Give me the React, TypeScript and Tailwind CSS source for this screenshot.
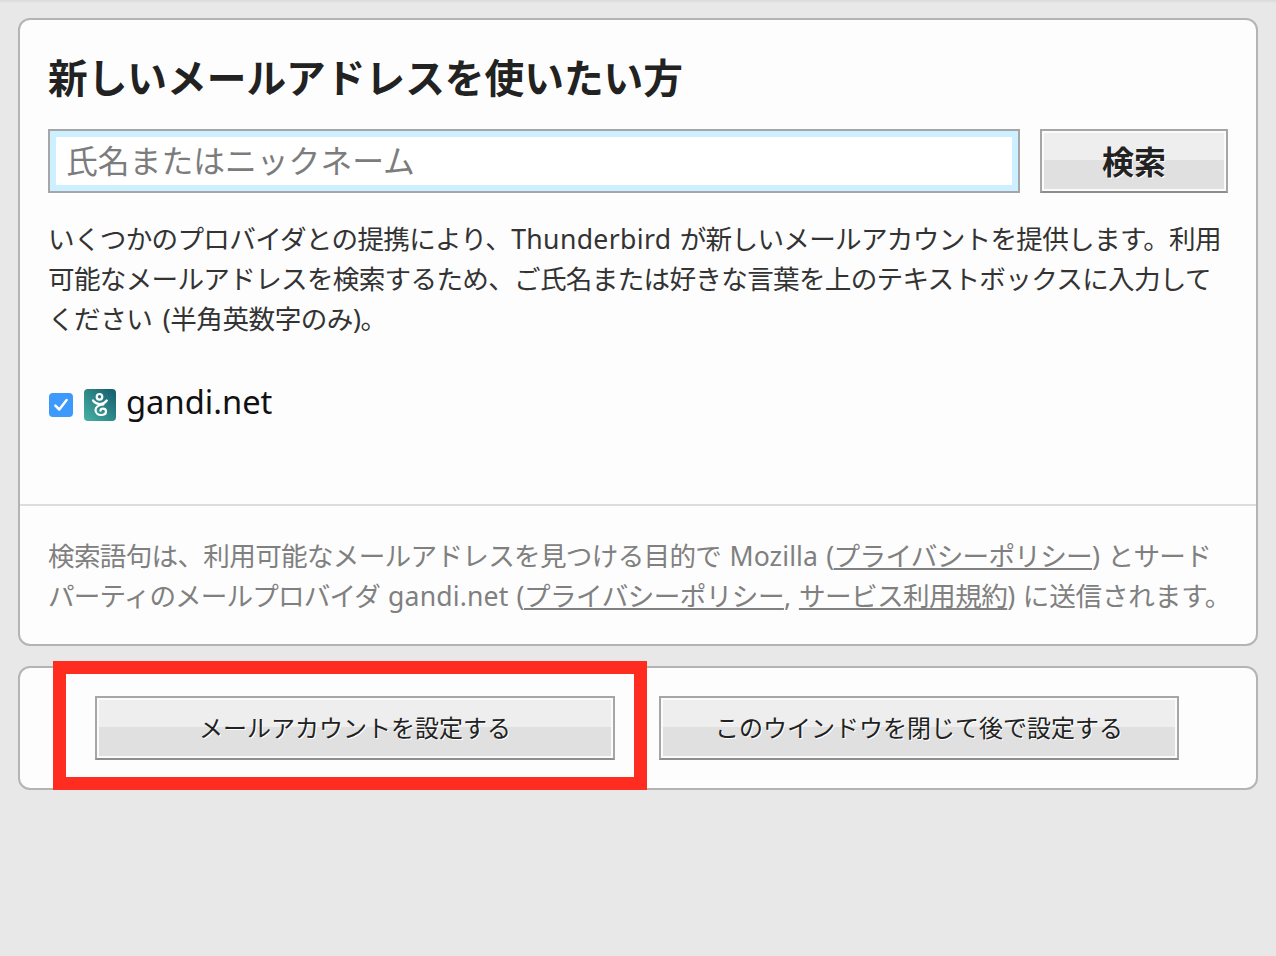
const font = "font-['Noto_Sans','Noto_Sans_CJK_JP',sans-serif]";

const GrayButton = ({ label, className }: { label: string; className: string }) => (
  <button
    type="button"
    className={`border-2 border-[#a6a6a6] border-b-[#8e8e8e] shadow-[inset_0_0_0_2px_#fbfbfb] bg-[linear-gradient(#eeeeee_29px,#e0e0e0_29px)] text-[#222222] [text-shadow:1px_1px_0_#ffffff] font-['Liberation_Sans','Noto_Sans_CJK_JP',sans-serif] ${className}`}
  >
    {label}
  </button>
);

const GandiLogo = () => (
  <svg width="32" height="32" viewBox="0 0 32 32" className="block shrink-0">
    <defs>
      <linearGradient id="gandi" x1="0" y1="1" x2="1" y2="0">
        <stop offset="0" stopColor="#46b3a3" />
        <stop offset="1" stopColor="#155a6c" />
      </linearGradient>
    </defs>
    <rect width="32" height="32" rx="4" fill="url(#gandi)" />
    <circle cx="15.500" cy="7.800" r="2.800" fill="none" stroke="#fff" strokeWidth="2.200" />
    <path
      d="M9 11.500c1.800 2.400 4.500 3.500 7 3.500 2.700 0 5-1.200 6.800-3.500M19.500 15.500c-4 .5-8 2-8 5.500 0 3 2.500 5 5.500 5 3 0 5-1.500 5-3.500 0-1.800-1.500-2.800-3-2.800-1.500 0-2.500.8-2.500 2"
      fill="none"
      stroke="#fff"
      strokeWidth="2.200"
      strokeLinecap="round"
    />
  </svg>
);

export default function App() {
  return (
    <div className={`${font} relative min-h-[956px] bg-[#e8e8e8] px-[18px] pt-[18px] shadow-[inset_0_3px_2px_-1px_#dcdcdc]`}>
      <section className="h-[628px] rounded-[12px] border-2 border-[#b4b4b4] bg-[#fdfdfd] flex flex-col">
        <div className="flex-1 px-[28px]">
          <h1 className="mt-[34px] text-[39.700px] leading-[50px] font-bold text-[#222222] font-['Liberation_Sans','Noto_Sans_CJK_JP',sans-serif]">新しいメールアドレスを使いたい方</h1>
          <div className="mt-[25px] flex gap-[20px]">
            <div className="h-[64px] w-[972px] border-2 border-[#a6a6a6] bg-white shadow-[inset_0_0_0_6px_#ccf0ff] flex items-center pl-[16px] text-[31.800px] text-[#7c7c7c]">
              氏名またはニックネーム
            </div>
            <GrayButton label="検索" className="h-[64px] w-[188px] pt-[3px] text-[32px] font-bold" />
          </div>
          <p className="mt-[26px] whitespace-nowrap text-[26.6px] leading-[40px] tracking-[-0.7px] [word-spacing:2px] text-[#333333]">
            いくつかのプロバイダとの提携により、<span className="tracking-[0.35px]">Thunderbird</span> が新しいメールアカウントを提供します。利用
            <br />
            可能なメールアドレスを検索するため、ご氏名または好きな言葉を上のテキストボックスに入力して
            <br />
            <span className="[word-spacing:4px] tracking-[-0.5px]">ください (半角英数字のみ)。</span>
          </p>
          <div className="mt-[44px] flex items-center h-[40px]">
            <span className="mt-[4px] flex h-[24px] w-[24px] items-center justify-center rounded-[4px] bg-[#3d99fb] ml-[1px]">
              <svg width="18" height="18" viewBox="0 0 16 16" fill="none" stroke="#fff" strokeWidth="2.200" strokeLinecap="round" strokeLinejoin="round">
                <path d="M3 8.500 6.500 12 13 3.500" />
              </svg>
            </span>
            <span className="ml-[11px] mt-[4px]"><GandiLogo /></span>
            <span className="ml-[10px] -mt-[2px] text-[32.700px] text-[#111111]">gandi.net</span>
          </div>
        </div>
        <div className="h-[140px] border-t-2 border-[#dddddd] px-[28px] pt-[30px] whitespace-nowrap text-[26.6px] leading-[40px] tracking-[-0.7px] [word-spacing:2px] text-[#808080]">
          <p>
            検索語句は、利用可能なメールアドレスを見つける目的で <span className="tracking-[0.1px]">Mozilla</span> (<span className="underline">プライバシーポリシー</span>) とサード
          </p>
          <p className="tracking-[-0.85px]">
            パーティのメールプロバイダ <span className="tracking-[0.15px]">gandi.net</span>{' '}
            <span className="tracking-[-0.55px]">(<span className="underline">プライバシーポリシー</span>, <span className="underline">サービス利用規約</span>)</span>{' '}
            <span className="tracking-[-0.2px]">に送信されます。</span>
          </p>
        </div>
      </section>
      <section className="mt-[20px] flex h-[124px] gap-[44px] rounded-[12px] border-2 border-[#b4b4b4] bg-[#fdfdfd] pl-[75px] pt-[28px]">
        <GrayButton label="メールアカウントを設定する" className="h-[64px] w-[520px] pt-[2px] text-[24px]" />
        <GrayButton label="このウインドウを閉じて後で設定する" className="h-[64px] w-[520px] pt-[2px] text-[24px]" />
      </section>
      {/* annotation drawn over the screenshot */}
      <div className="absolute left-[53px] top-[661px] h-[129px] w-[594px] border-[13px] border-[#ff2d20]" />
    </div>
  );
}
